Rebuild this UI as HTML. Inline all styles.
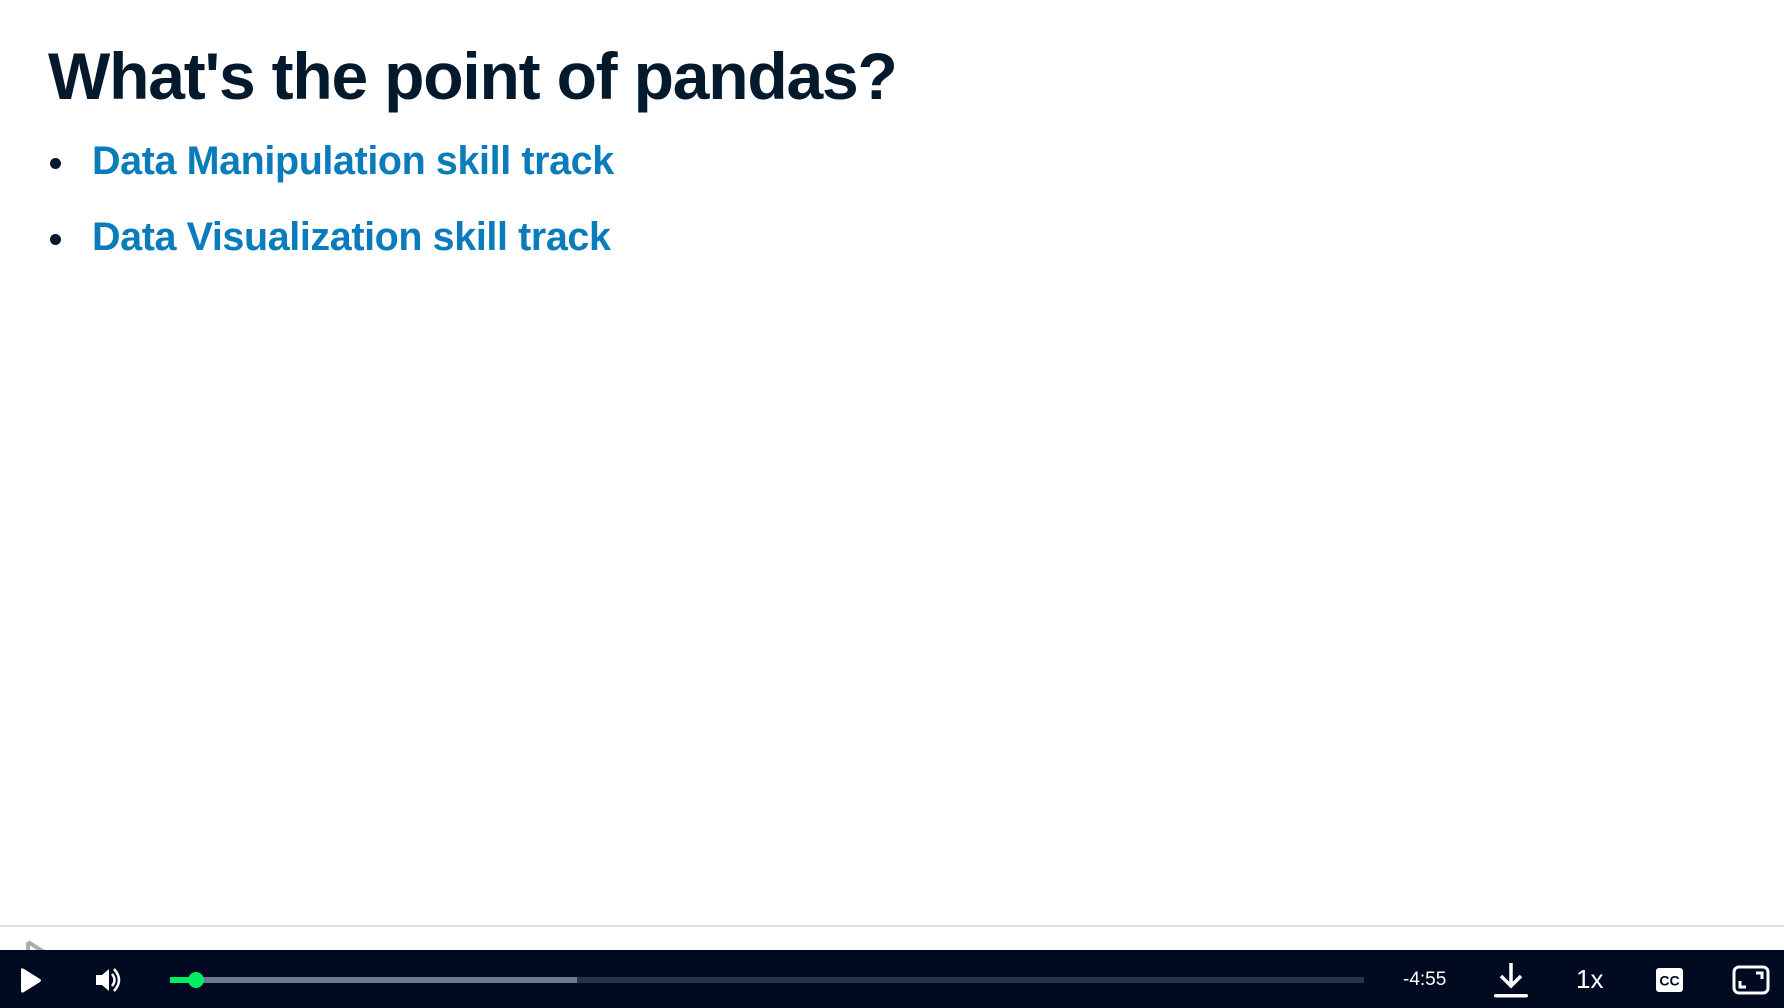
<!DOCTYPE html>
<html><head><meta charset="utf-8"><style>
html,body{margin:0;padding:0;width:1784px;height:1008px;overflow:hidden;background:#fff;font-family:"Liberation Sans",sans-serif;position:relative}
h1{position:absolute;left:48px;top:38px;margin:0;font-size:66px;font-weight:700;color:#05192d;letter-spacing:-1.2px;white-space:nowrap}
.b{position:absolute;left:92px;font-size:39.5px;font-weight:700;color:#0a7bbb;letter-spacing:-0.4px;white-space:nowrap}
.dot{position:absolute;left:50px;width:11px;height:11px;border-radius:50%;background:#05192d}
.line{position:absolute;left:0;top:925px;width:1784px;height:2px;background:#e5e1da}
.bar{position:absolute;left:0;top:950px;width:1784px;height:58px;background:#000a20}
.w{position:absolute;color:#fff}
</style></head><body>
<h1>What's the point of pandas?</h1>
<div class="dot" style="top:158px"></div>
<div class="b" style="top:139px">Data Manipulation skill track</div>
<div class="dot" style="top:234px"></div>
<div class="b" style="top:215px">Data Visualization skill track</div>
<div class="line"></div>
<svg style="position:absolute;left:24px;top:940px" width="26" height="14"><path d="M4 2 L20 12" stroke="#a8adb5" stroke-width="4" fill="none"/><path d="M4 2 V14" stroke="#a8adb5" stroke-width="4"/></svg>
<div class="bar">
<svg style="position:absolute;left:16px;top:16px" width="28" height="28" viewBox="0 0 28 28"><path d="M5 4 Q5 1 8 3 L24 13 Q26 14 24 16 L8 26 Q5 28 5 24 Z" fill="#fff"/></svg>
<svg style="position:absolute;left:94px;top:15px" width="32" height="30" viewBox="0 0 32 30"><path d="M2 10 H8 L15 4 V26 L8 20 H2 Z" fill="#fff"/><path d="M18 9 Q23 15 18 21" stroke="#fff" stroke-width="2.5" fill="none"/><path d="M20 4 Q30 15 20 26" stroke="#fff" stroke-width="2.5" fill="none"/></svg>
<div style="position:absolute;left:190px;top:27px;width:1174px;height:6px;background:#263248"></div>
<div style="position:absolute;left:190px;top:27px;width:387px;height:6px;background:#687b93"></div>
<div style="position:absolute;left:170px;top:27px;width:26px;height:6px;background:#03ef62"></div>
<div style="position:absolute;left:188px;top:22px;width:16px;height:16px;border-radius:50%;background:#03ef62"></div>
<div class="w" style="left:1403px;top:19px;font-size:19px">-4:55</div>
<svg style="position:absolute;left:1492px;top:10px" width="38" height="40" viewBox="0 0 38 40"><path d="M19 3 V26 M9 16 L19 26 L29 16" stroke="#fff" stroke-width="3.5" fill="none"/><rect x="2" y="34" width="34" height="3.5" rx="1.7" fill="#fff"/></svg>
<div class="w" style="left:1576px;top:14px;font-size:26px">1x</div>
<svg style="position:absolute;left:1656px;top:17px" width="28" height="26" viewBox="0 0 28 26"><rect x="0" y="1" width="27" height="24" rx="3" fill="#fff"/><text x="13.5" y="18.5" font-family="Liberation Sans" font-weight="700" font-size="14" fill="#000a20" text-anchor="middle">CC</text></svg>
<svg style="position:absolute;left:1732px;top:15px" width="38" height="30" viewBox="0 0 38 30"><rect x="2" y="2" width="34" height="26" rx="5" stroke="#fff" stroke-width="3" fill="none"/><path d="M24 8 H30 V14 M8 16 V22 H14" stroke="#fff" stroke-width="3" fill="none"/></svg>
</div>
</body></html>
